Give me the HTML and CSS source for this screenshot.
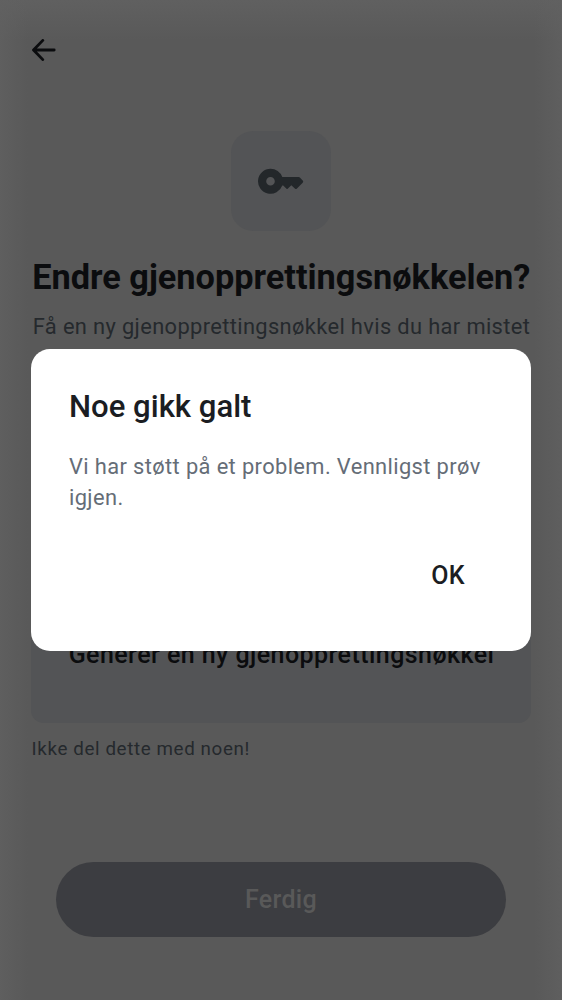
FILE: index.html
```
<!DOCTYPE html>
<html lang="nb">
<head>
<meta charset="utf-8">
<title>Gjenopprettingsnøkkel</title>
<link rel="stylesheet" href="styles.css">
</head>
<body>
<main class="screen">
  <header class="topbar">
    <svg class="back" viewBox="0 0 24 22" width="24" height="22"><path d="M10.8 1.4 1.5 11l9.3 9.6M1.7 11h20.5" fill="none" stroke="currentColor" stroke-width="2.8" stroke-linecap="round" stroke-linejoin="round"/></svg>
  </header>
  <div class="tile">
    <svg class="key" viewBox="0 0 46 26" width="46" height="26"><path fill="currentColor" fill-rule="evenodd" d="M12.5.8a12.5 12.5 0 1 0 11.8 16.7h.9l3.3 3.3q.6.5 1.2 0l3.6-3.5 3.8 3.5q.8.6 1.6 0l6-6q1-1.2 0-2.4l-2.6-2.7q-.6-.6-1.5-.6H24.3A12.5 12.5 0 0 0 12.5.8Zm0 8.2a4.3 4.3 0 1 1 0 8.6 4.3 4.3 0 0 1 0-8.6Z"/></svg>
  </div>
  <h1 class="heading">Endre gjenopprettingsnøkkelen?</h1>
  <p class="lead">Få en ny gjenopprettingsnøkkel hvis du har mistet<br>den eksisterende. Etter at du har endret</p>
  <section class="card"><span class="card-label">Generer en ny gjenopprettingsnøkkel</span></section>
  <p class="hint">Ikke del dette med noen!</p>
  <button class="done">Ferdig</button>
</main>
<div class="overlay">
  <div class="dialog" role="alertdialog">
    <h2 class="dialog-title">Noe gikk galt</h2>
    <p class="dialog-text">Vi har støtt på et problem. Vennligst prøv igjen.</p>
    <div class="actions"><button class="ok">OK</button></div>
  </div>
</div>
</body>
</html>
```
FILE: styles.css
```
* { box-sizing: border-box; margin: 0; padding: 0; }
body { width: 562px; height: 1000px; overflow: hidden; font-family: Roboto, "Noto Sans", sans-serif; background: #595959; }
button { border: 0; font: inherit; }
.screen {
  height: 1000px;
  padding: 0 31px;
  display: flex;
  flex-direction: column;
  background:
    linear-gradient(to right, rgba(97, 97, 97, .7), rgba(97, 97, 97, 0) 28px, rgba(97, 97, 97, 0) 534px, rgba(97, 97, 97, .7)),
    linear-gradient(to bottom, #606060, #595959 40px);
}
.topbar { height: 131px; flex: none; padding: 39px 0 0 1px; color: #0b0c0e; }
.back { display: block; }
.tile {
  width: 100px; height: 100px; flex: none;
  align-self: center;
  border-radius: 22px;
  background: #535456;
  display: flex; align-items: center; justify-content: center;
  color: #23272a;
}
.key { display: block; }
.heading { margin-top: 25px; padding-left: .5px; font-size: 34.3px; line-height: 42px; font-weight: 700; text-align: center; white-space: nowrap; color: #0b0c0e; }
.lead { margin-top: 13px; padding-left: 1px; font-size: 21.87px; line-height: 31px; letter-spacing: .36px; text-align: center; white-space: nowrap; color: #25292d; }
.card {
  height: 141px; flex: none; margin-top: 209px;
  border-radius: 12.5px;
  background: #535456;
  display: flex; align-items: center; justify-content: center;
}
.card-label { padding: 4px 0 0 1px; font-size: 25px; line-height: 37px; font-weight: 500; letter-spacing: .44px; color: #0b0c0e; white-space: nowrap; }
.hint { margin-top: 14px; padding-left: .6px; font-size: 18.75px; line-height: 25px; letter-spacing: .62px; color: #25292d; }
.done {
  height: 75px; flex: none; margin: 100px 25px 0;
  border-radius: 38px;
  background: #3c3d41; color: #595959;
  font-size: 25px; font-weight: 500; letter-spacing: .3px;
}
.overlay { position: absolute; inset: 0; padding: 349px 31px 0; }
.dialog { width: 500px; height: 301.5px; padding: 37px 38px; border-radius: 19px; background: #fff; }
.dialog-title { font-size: 31.1px; line-height: 41px; font-weight: 500; color: #1b1d22; }
.dialog-text { margin-top: 24px; font-size: 21.87px; line-height: 31px; letter-spacing: .38px; color: #656d77; }
.actions { display: flex; justify-content: flex-end; margin-top: 44px; }
.ok { padding: 0 28px; background: none; font-size: 25px; line-height: 37px; font-weight: 500; letter-spacing: .4px; color: #1b1d22; }
```
